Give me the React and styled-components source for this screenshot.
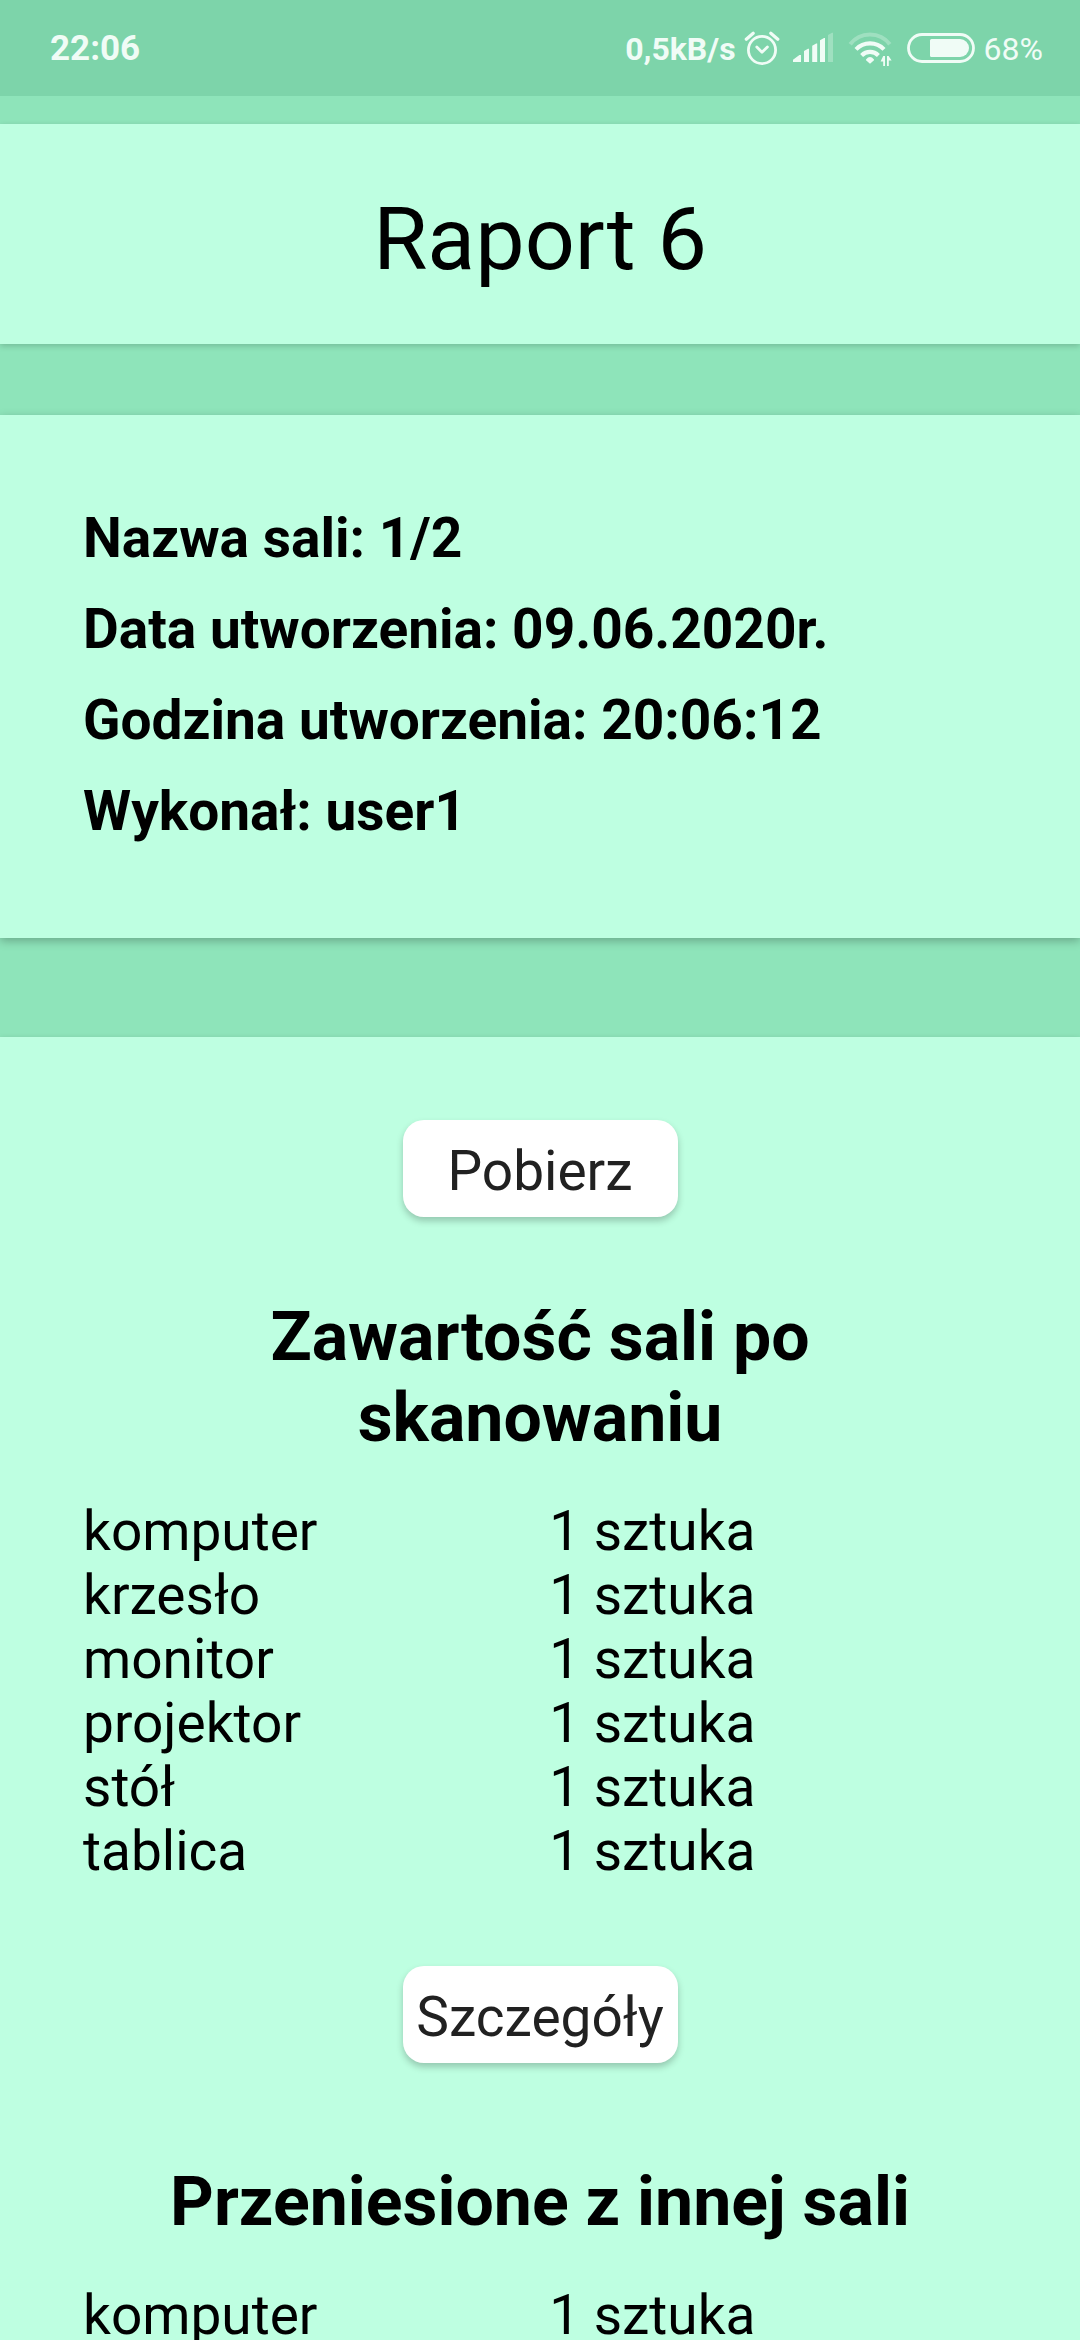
import React from "react";
import styled, { createGlobalStyle } from "styled-components";

const GlobalStyle = createGlobalStyle`
  *, *::before, *::after { box-sizing: border-box; }
  body { margin: 0; background: #8ee4ba; font-family: Roboto, "Noto Sans", sans-serif; color: #000; }
`;

const Screen = styled.div`
  display: flex;
  flex-direction: column;
  height: 100vh;
`;

const StatusBar = styled.header`
  flex: none;
  display: flex;
  align-items: center;
  justify-content: space-between;
  height: 96px;
  padding: 0 37px 0 50px;
  background: #7dd4aa;
  color: #f0fcf6;
`;

const StatusGroup = styled.div`
  display: flex;
  align-items: center;
  gap: 8px;
`;

const StatusText = styled.span`
  padding-top: 2px;
  font-size: ${(p) => p.$size}px;
  font-weight: ${(p) => p.$weight};
  line-height: 40px;
`;

const StatusIcon = styled.svg`
  display: block;
  flex: none;
`;

const Content = styled.main`
  flex: 1;
  min-height: 0;
  overflow-y: auto;
  scrollbar-width: none;
  padding-top: 28px;
`;

const Card = styled.section`
  background: #beffe1;
  box-shadow: 0 2px 6px rgba(0, 0, 0, 0.18);
`;

const TitleCard = styled(Card)`
  padding: 63px 83px 54px;
`;

const InfoCard = styled(Card)`
  display: flex;
  flex-direction: column;
  gap: 27px;
  margin-top: 71px;
  padding: 91px 83px 95px;
  box-shadow: 0 3px 9px rgba(0, 0, 0, 0.26);
`;

const ReportCard = styled(Card)`
  margin-top: 99px;
  padding: 83px 83px 96px;
`;

const Title = styled.h1`
  margin: 0;
  font-size: 88px;
  font-weight: 400;
  line-height: 103px;
  text-align: center;
`;

const InfoLine = styled.p`
  margin: 0;
  font-size: 55px;
  font-weight: 700;
  line-height: 64px;
`;

const Heading = styled.h2`
  margin: 0 0 40px;
  padding: 0 40px;
  font-size: 68px;
  font-weight: 700;
  line-height: 81px;
  text-align: center;
`;

const ActionButton = styled.button`
  display: block;
  width: 275px;
  margin: 0 auto ${(p) => p.$after}px;
  padding: 19px 0 14px;
  border: 0;
  border-radius: 21px;
  background: #fff;
  box-shadow: 0 4px 7px rgba(0, 0, 0, 0.22);
  color: #212121;
  font-family: inherit;
  font-size: 55px;
  line-height: 64px;
  white-space: nowrap;
`;

const ItemTable = styled.table`
  width: 100%;
  margin-bottom: 83px;
  border-collapse: collapse;
  table-layout: fixed;
  font-size: 55px;
  line-height: 64px;
`;

const Cell = styled.td`
  width: ${(p) => p.$width};
  padding: 0;
`;

function AlarmIcon() {
  return (
    <StatusIcon width="36" height="40" viewBox="0 0 36 40" fill="none" stroke="currentColor" strokeLinecap="round" strokeLinejoin="round" aria-hidden="true">
      <circle cx="18" cy="22" r="13.6" strokeWidth="2.8" />
      <path d="M12.8 19 18 24.2 23.4 19" strokeWidth="2.8" />
      <path d="M2.3 11.3 9.2 5.3M26.8 5.3l7 6" strokeWidth="3.2" />
    </StatusIcon>
  );
}

function SignalIcon() {
  return (
    <StatusIcon width="52" height="40" viewBox="0 0 52 40" fill="currentColor" aria-hidden="true">
      <path d="M5 31.8 11.4 27H13v7H5zM16 23l4-2.3h1V34h-5zM24.2 17.8l4-2.3h1V34h-5zM32 12.3l4-2.3h1V34h-5z" />
      <path d="M40 7l4-2.3h1V34h-5z" opacity="0.3" />
    </StatusIcon>
  );
}

function WifiIcon() {
  return (
    <StatusIcon width="50" height="40" viewBox="0 0 50 40" fill="none" stroke="currentColor" aria-hidden="true">
      <path d="M2.2 16.2A25 25 0 0 1 41.8 16.2" strokeWidth="4" opacity="0.3" />
      <path d="M8 21.4A19.5 19.5 0 0 1 36 21.4" strokeWidth="4.2" />
      <path d="M13.6 27.4A12 12 0 0 1 30.4 27.4" strokeWidth="4.2" />
      <path d="M18 31.4Q22 26.8 26 31.4V32.2L22 35.8 18 32.2z" fill="currentColor" stroke="none" />
      <path d="M35.2 28H37v10h-1.8v-4.4h-2.6zM39 28h1.6l3 4.6h-2.8V38H39z" fill="currentColor" stroke="none" />
    </StatusIcon>
  );
}

function BatteryIcon() {
  return (
    <StatusIcon width="70" height="40" viewBox="0 0 70 40" fill="none" aria-hidden="true">
      <rect x="2.5" y="6.5" width="65" height="27" rx="13.5" stroke="currentColor" strokeWidth="2.8" />
      <path d="M25.5 11H54a9 9 0 0 1 0 18H25.5a1.5 1.5 0 0 1-1.5-1.5v-15a1.5 1.5 0 0 1 1.5-1.5z" fill="currentColor" />
    </StatusIcon>
  );
}

function ItemList({ label, items }) {
  return (
    <ItemTable aria-label={label}>
      <tbody>
        {items.map((name) => (
          <tr key={name}>
            <Cell $width="51%">{name}</Cell>
            <Cell $width="49%">1 sztuka</Cell>
          </tr>
        ))}
      </tbody>
    </ItemTable>
  );
}

const details = [
  ["Nazwa sali", "1/2"],
  ["Data utworzenia", "09.06.2020r."],
  ["Godzina utworzenia", "20:06:12"],
  ["Wykonał", "user1"],
];

const scanned = ["komputer", "krzesło", "monitor", "projektor", "stół", "tablica"];
const moved = ["komputer"];

export default function App() {
  return (
    <Screen>
      <GlobalStyle />
      <StatusBar>
        <StatusText $size={35} $weight={700}>22:06</StatusText>
        <StatusGroup>
          <StatusText $size={32} $weight={700}>0,5kB/s</StatusText>
          <AlarmIcon />
          <SignalIcon />
          <WifiIcon />
          <BatteryIcon />
          <StatusText $size={32} $weight={400}>68%</StatusText>
        </StatusGroup>
      </StatusBar>
      <Content>
        <TitleCard>
          <Title>Raport 6</Title>
        </TitleCard>
        <InfoCard>
          {details.map(([name, value]) => (
            <InfoLine key={name}>{`${name}: ${value}`}</InfoLine>
          ))}
        </InfoCard>
        <ReportCard>
          <ActionButton type="button" $after={80}>Pobierz</ActionButton>
          <Heading>Zawartość sali po skanowaniu</Heading>
          <ItemList label="Zawartość sali po skanowaniu" items={scanned} />
          <ActionButton type="button" $after={99}>Szczegóły</ActionButton>
          <Heading>Przeniesione z innej sali</Heading>
          <ItemList label="Przeniesione z innej sali" items={moved} />
        </ReportCard>
      </Content>
    </Screen>
  );
}
